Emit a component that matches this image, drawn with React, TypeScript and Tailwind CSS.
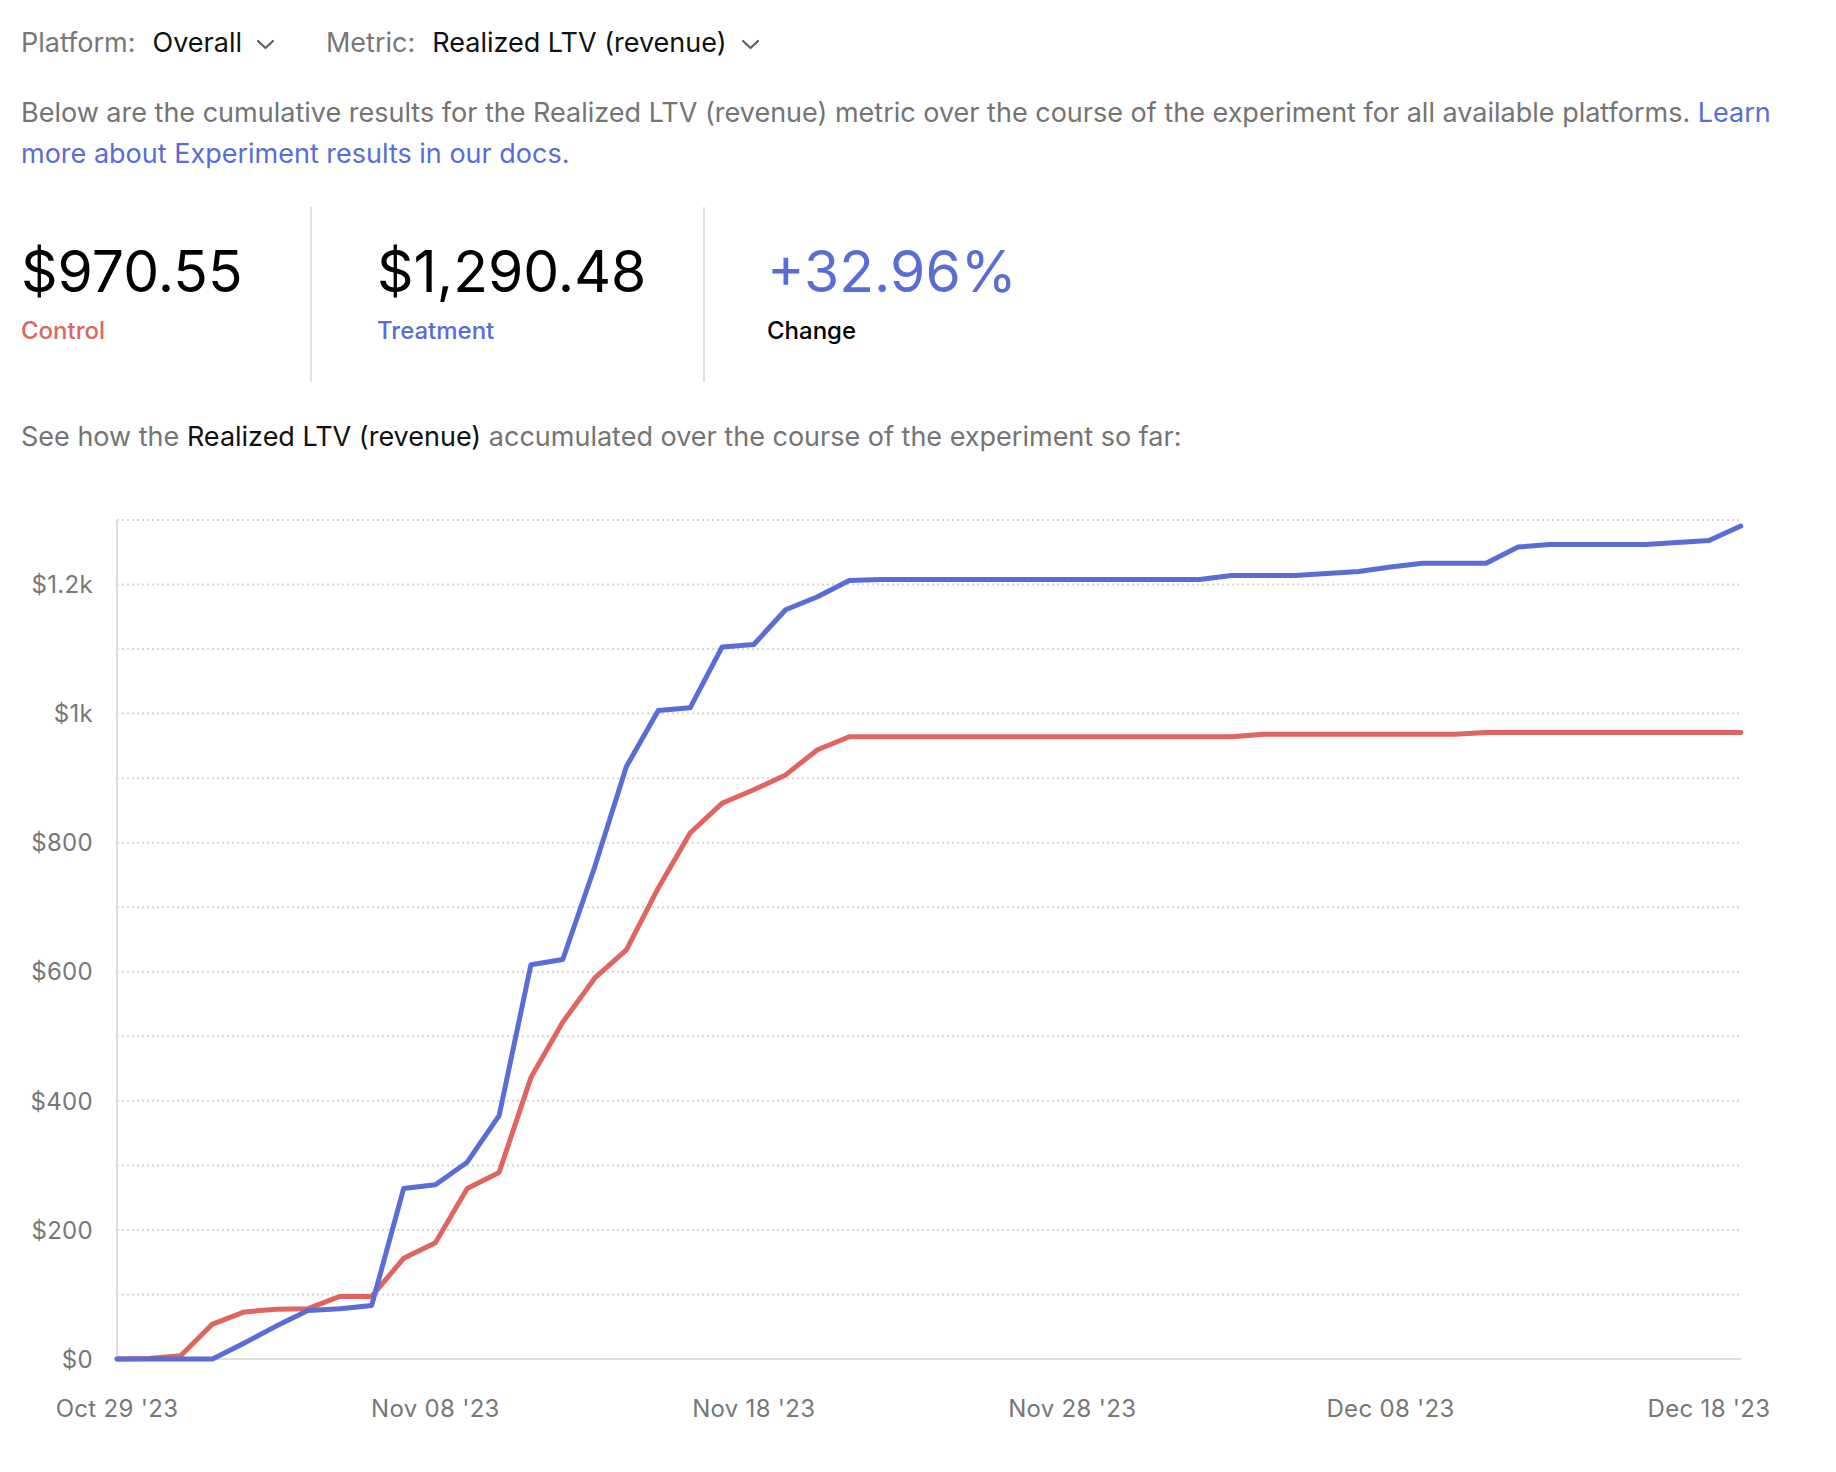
const BLUE = "#5a6cd6";
const RED = "#e0645f";

const control: number[] = [
  0, 1, 5, 54, 73, 77, 78, 97, 97, 156, 180, 264, 289, 436, 522, 590, 634, 730, 815, 861, 882, 905, 944, 964,
  ...Array(12).fill(964),
  ...Array(7).fill(968),
  ...Array(9).fill(970.55),
];

const treatment: number[] = [
  0, 0, 0, 0, 25, 51, 75, 78, 83, 264, 270, 305, 377, 611, 619, 762, 918, 1005, 1009, 1103, 1107, 1161, 1181, 1206,
  ...Array(11).fill(1208),
  ...Array(3).fill(1214),
  1217, 1220, 1227,
  ...Array(3).fill(1233),
  1258,
  ...Array(4).fill(1262),
  1265, 1268, 1290.48,
];

const xTicks = ["Oct 29 '23", "Nov 08 '23", "Nov 18 '23", "Nov 28 '23", "Dec 08 '23", "Dec 18 '23"];

// chart geometry, in svg pixels
const X0 = 117;
const DX = 31.84;
const Y0 = 902;
const PX_PER_UNIT = 0.6454;

const px = (i: number) => X0 + i * DX;
const py = (v: number) => Y0 - v * PX_PER_UNIT;
const toPoints = (data: number[]) => data.map((v, i) => `${px(i).toFixed(1)},${py(v).toFixed(1)}`).join(" ");

function Chevron() {
  return (
    <svg width="19" height="11" viewBox="0 0 19 11" fill="none" className="ml-[14px] mt-[2px]">
      <path d="M2 2l7.5 7 7.5-7" stroke="#5f5f5f" strokeWidth="2.2" strokeLinecap="round" strokeLinejoin="round" />
    </svg>
  );
}

function Picker({ label, value }: { label: string; value: string }) {
  return (
    <div className="flex items-center">
      <span className="text-[#777777]">{label}</span>
      <span className="ml-[17px] text-[#111111]">{value}</span>
      <Chevron />
    </div>
  );
}

function Chart() {
  const right = px(control.length - 1);
  const grid = Array.from({ length: 13 }, (_, k) => (k + 1) * 100);
  const yLabels = [0, 200, 400, 600, 800, 1000, 1200];

  return (
    <svg viewBox="0 0 1836 990" width="1836" height="990" className="block">
      {grid.map((v) => (
        <line key={v} x1={X0} x2={right} y1={py(v)} y2={py(v)} stroke="#d6d6d6" strokeWidth="2" strokeDasharray="2 3" />
      ))}
      <line x1={X0} x2={X0} y1={py(1300)} y2={Y0} stroke="#dddddd" strokeWidth="2" />
      <line x1={X0} x2={right} y1={Y0} y2={Y0} stroke="#dddddd" strokeWidth="2" />

      {yLabels.map((v) => (
        <text key={v} x={93} y={py(v) + 8.7} textAnchor="end" fontSize="24" letterSpacing="0.3" fill="#777777">
          {v === 0 ? "$0" : v >= 1000 ? `$${v / 1000}k` : `$${v}`}
        </text>
      ))}
      {xTicks.map((t, k) => (
        <text key={t} x={px(k * 10)} y={959.7} textAnchor="middle" fontSize="24" letterSpacing="0.3" fill="#777777">
          {t}
        </text>
      ))}

      <polyline points={toPoints(control)} fill="none" stroke={RED} strokeWidth="5" strokeLinecap="round" strokeLinejoin="round" />
      <polyline points={toPoints(treatment)} fill="none" stroke={BLUE} strokeWidth="5" strokeLinecap="round" strokeLinejoin="round" />
    </svg>
  );
}

export default function App() {
  return (
    <div className="w-[1836px] bg-white font-['Inter','Noto_Sans',sans-serif] antialiased">
      <div className="px-[21px] pt-[27px]">
        <div className="flex items-center gap-[51px] text-[27px] leading-[32px]">
          <Picker label="Platform:" value="Overall" />
          <Picker label="Metric:" value="Realized LTV (revenue)" />
        </div>

        <p className="mt-[33px] text-[27px] leading-[41px] text-[#747474]">
          Below are the cumulative results for the Realized LTV (revenue) metric over the course of the experiment for
          all available platforms.{" "}
          <a href="#" className="text-[#5a6cd6]">
            Learn more about Experiment results in our docs.
          </a>
        </p>

        <div className="mt-[33px] flex h-[175px]">
          <div className="w-[289px] pt-[36px]">
            <div className="text-[57px] leading-[58px] text-black">$970.55</div>
            <div className="mt-[16px] text-[24px] leading-[28px] font-medium text-[#e0645f]">Control</div>
          </div>
          <div className="w-[393px] border-l-2 border-[#e2e2e2] pl-[65px] pt-[36px]">
            <div className="text-[57px] leading-[58px] text-black">$1,290.48</div>
            <div className="mt-[16px] text-[24px] leading-[28px] font-medium text-[#5a6cd6]">Treatment</div>
          </div>
          <div className="border-l-2 border-[#e2e2e2] pl-[62px] pt-[36px]">
            <div className="text-[57px] leading-[58px] text-[#5a6cd6]">+32.96%</div>
            <div className="mt-[16px] text-[24px] leading-[28px] font-medium text-black">Change</div>
          </div>
        </div>

        <p className="mt-[34px] text-[27px] leading-[41px] text-[#747474]">
          See how the <span className="text-[#111111]">Realized LTV (revenue)</span> accumulated over the course of the
          experiment so far:
        </p>
      </div>

      <Chart />
    </div>
  );
}
